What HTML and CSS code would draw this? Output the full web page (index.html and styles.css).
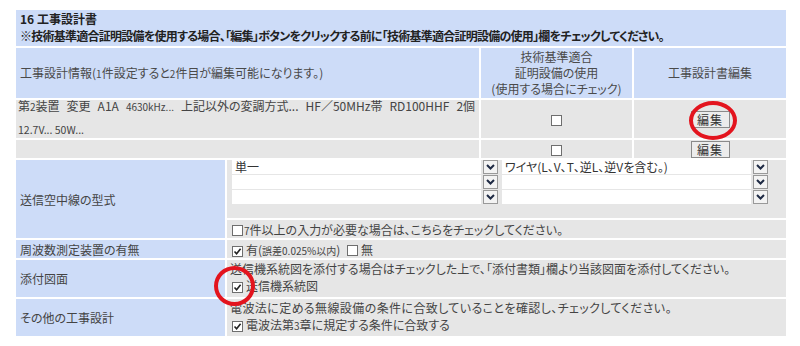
FILE: index.html
```html
<!DOCTYPE html>
<html lang="ja">
<head>
  <meta charset="UTF-8">
  <meta name="viewport" content="width=device-width, initial-scale=1.0">
  <title>工事設計書</title>
  <link rel="stylesheet" href="styles.css">
</head>
<body>
  <div class="page">
    <div class="title">
      <div class="no">16 工事設計書</div>
      <div class="note">※技術基準適合証明設備を使用する場合、「編集」ボタンをクリックする前に「技術基準適合証明設備の使用」欄をチェックしてください。</div>
    </div>

    <table class="grid design">
      <colgroup>
        <col class="c-info">
        <col class="c-use">
        <col class="c-edit">
      </colgroup>
      <tr class="head">
        <th class="left">工事設計情報(<small>1</small>件設定すると<small>2</small>件目が編集可能になります。)</th>
        <th>技術基準適合<br>証明設備の使用<br>(使用する場合にチェック)</th>
        <th>工事設計書編集</th>
      </tr>
      <tr class="item">
        <td class="info">
          <span class="l1">
            <span>第<small>2</small>装置</span>
            <span>変更</span>
            <span>A1A</span>
            <span><small>4630kHz...</small></span>
            <span>上記以外の変調方式...</span>
            <span>HF／50MHz帯</span>
            <span>RD100HHF</span>
            <span>2個</span>
          </span>
          <span class="l2">12.7V... 50W...</span>
        </td>
        <td class="center"><span class="cb"></span></td>
        <td class="center"><button class="edit">編集</button></td>
      </tr>
      <tr class="item empty">
        <td></td>
        <td class="center"><span class="cb"></span></td>
        <td class="center"><button class="edit">編集</button></td>
      </tr>
    </table>

    <table class="grid detail">
      <colgroup>
        <col class="c-label">
        <col class="c-body">
      </colgroup>
      <tr class="antenna">
        <th rowspan="2">送信空中線の型式</th>
        <td class="selects">
          <div class="select-grid">
            <div class="select"><span class="value">単一</span><span class="arrow"><svg width="11" height="8" viewBox="0 0 11 8"><path d="M2 2 L5.5 5.5 L9 2" fill="none" stroke="#1e2a44" stroke-width="2"/></svg></span></div>
            <div class="select"><span class="value">ワイヤ(L、V、T、逆L、逆Vを含む。)</span><span class="arrow"><svg width="11" height="8" viewBox="0 0 11 8"><path d="M2 2 L5.5 5.5 L9 2" fill="none" stroke="#1e2a44" stroke-width="2"/></svg></span></div>
            <div class="select"><span class="value"></span><span class="arrow"><svg width="11" height="8" viewBox="0 0 11 8"><path d="M2 2 L5.5 5.5 L9 2" fill="none" stroke="#1e2a44" stroke-width="2"/></svg></span></div>
            <div class="select"><span class="value"></span><span class="arrow"><svg width="11" height="8" viewBox="0 0 11 8"><path d="M2 2 L5.5 5.5 L9 2" fill="none" stroke="#1e2a44" stroke-width="2"/></svg></span></div>
            <div class="select"><span class="value"></span><span class="arrow"><svg width="11" height="8" viewBox="0 0 11 8"><path d="M2 2 L5.5 5.5 L9 2" fill="none" stroke="#1e2a44" stroke-width="2"/></svg></span></div>
            <div class="select"><span class="value"></span><span class="arrow"><svg width="11" height="8" viewBox="0 0 11 8"><path d="M2 2 L5.5 5.5 L9 2" fill="none" stroke="#1e2a44" stroke-width="2"/></svg></span></div>
          </div>
        </td>
      </tr>
      <tr class="single">
        <td class="more"><span class="cb"></span><small>7</small>件以上の入力が必要な場合は、こちらをチェックしてください。</td>
      </tr>
      <tr class="single">
        <th>周波数測定装置の有無</th>
        <td class="opts">
          <label><span class="cb on"><svg width="9" height="9" viewBox="0 0 9 9"><path d="M1.5 4.5 L3.6 6.8 L7.6 1.8" fill="none" stroke="#222" stroke-width="1.6"/></svg></span>有(<small>誤差0.025%以内</small>)</label>
          <label><span class="cb"></span>無</label>
        </td>
      </tr>
      <tr class="double">
        <th>添付図面</th>
        <td class="lines">
          <div>送信機系統図を添付する場合はチェックした上で、「添付書類」欄より当該図面を添付してください。</div>
          <label><span class="cb on"><svg width="9" height="9" viewBox="0 0 9 9"><path d="M1.5 4.5 L3.6 6.8 L7.6 1.8" fill="none" stroke="#222" stroke-width="1.6"/></svg></span>送信機系統図</label>
        </td>
      </tr>
      <tr class="double">
        <th>その他の工事設計</th>
        <td class="lines">
          <div class="wide">電波法に定める無線設備の条件に合致していることを確認し、チェックしてください。</div>
          <label><span class="cb on"><svg width="9" height="9" viewBox="0 0 9 9"><path d="M1.5 4.5 L3.6 6.8 L7.6 1.8" fill="none" stroke="#222" stroke-width="1.6"/></svg></span>電波法第<small>3</small>章に規定する条件に合致する</label>
        </td>
      </tr>
    </table>

    <span class="mark mark-edit"></span>
    <span class="mark mark-check"></span>
  </div>
</body>
</html>
```

FILE: styles.css
```css
body {
  margin: 0;
  background: #fff;
  font-family: "Noto Sans CJK JP", "Liberation Sans", sans-serif;
  font-size: 12px;
  color: #3a3a3a;
  font-feature-settings: "palt";
}
.page {
  position: relative;
  width: 800px;
  height: 346px;
  padding: 10px 0 0 14px;
  box-sizing: border-box;
}
.title {
  margin: 0 2px;
  width: 770px;
  height: 36px;
  box-sizing: border-box;
  padding: 0 4px;
  background: #cddcf8;
  line-height: 17px;
  color: #222;
}
.title .no {
  font-weight: bold;
}
.title .note {
  font-weight: bold;
  letter-spacing: -0.75px;
}
.grid {
  table-layout: fixed;
  border-collapse: separate;
  border-spacing: 2px;
  width: 774px;
}
.grid th,
.grid td {
  padding: 0;
  font-weight: normal;
}
.design .c-info { width: 463px; }
.design .c-use { width: 151px; }
.design .c-edit { width: 152px; }
.design th {
  background: #cddcf8;
  color: #4a4a4a;
  line-height: 16px;
  text-align: center;
}
.design th.left {
  text-align: left;
  padding-left: 4px;
}
.design .head {
  height: 50px;
}
.design td {
  background: #e6e6e6;
}
.design .item {
  height: 38px;
}
.design .item.empty {
  height: 18px;
}
.info {
  vertical-align: top;
  padding-left: 2px !important;
  color: #444;
}
.info .l1 {
  display: flex;
  gap: 7px;
  line-height: 12px;
  white-space: nowrap;
}
.info .l2 {
  display: block;
  line-height: 12px;
  margin-top: 11px;
  font-size: 10.5px;
}
small {
  font-size: 10px;
}
.center {
  text-align: center;
  vertical-align: middle;
}
.cb {
  display: inline-flex;
  align-items: center;
  justify-content: center;
  width: 11px;
  height: 11px;
  box-sizing: border-box;
  border: 1px solid #6e6e6e;
  background: #fff;
  vertical-align: -1px;
}
.edit {
  width: 39px;
  height: 17px;
  padding: 0;
  font-family: inherit;
  font-size: 12px;
  line-height: 15px;
  color: #333;
  background: #ececec;
  border: 1px solid #8a8a8a;
  border-radius: 0;
  letter-spacing: 1px;
}
.detail {
  margin-top: -2px;
}
.detail .c-label { width: 209px; }
.detail .c-body { width: 559px; }
.detail th {
  background: #cddcf8;
  color: #444;
  text-align: left;
  padding-left: 4px;
}
.detail td {
  background: #e6e6e6;
}
.antenna {
  height: 58px;
}
.selects {
  vertical-align: top;
  padding-left: 5px !important;
}
.select-grid {
  display: grid;
  grid-template-columns: 266px 266px;
  column-gap: 4px;
  row-gap: 1px;
}
.select {
  display: flex;
  align-items: center;
  gap: 2px;
  height: 14px;
}
.select .value {
  flex: 1;
  height: 14px;
  background: #fff;
  line-height: 14px;
  padding-left: 3px;
  color: #333;
  white-space: nowrap;
}
.select .arrow {
  display: flex;
  align-items: center;
  justify-content: center;
  width: 15px;
  height: 14px;
  box-sizing: border-box;
  border: 1px solid #999;
  background: #f3f3f3;
}
.single {
  height: 18px;
}
.more {
  padding-left: 5px !important;
  color: #444;
}
.more .cb {
  margin-right: 1px;
}
.opts {
  padding-left: 5px !important;
  color: #444;
}
.opts label {
  margin-right: 4px;
}
.opts .cb {
  margin-right: 3px;
}
.double {
  height: 37px;
}
.lines {
  vertical-align: top;
  padding-left: 3px !important;
  line-height: 17px;
  color: #444;
}
.lines .wide {
  letter-spacing: 0.4px;
}
.lines label {
  display: block;
  padding-left: 2px;
}
.lines .cb {
  margin-right: 3px;
}
.mark {
  position: absolute;
  border: 4px solid #e3141e;
  border-radius: 50%;
  box-sizing: border-box;
}
.mark-edit {
  left: 689px;
  top: 101px;
  width: 48px;
  height: 39px;
}
.mark-check {
  left: 214px;
  top: 266px;
  width: 41px;
  height: 40px;
}
```
